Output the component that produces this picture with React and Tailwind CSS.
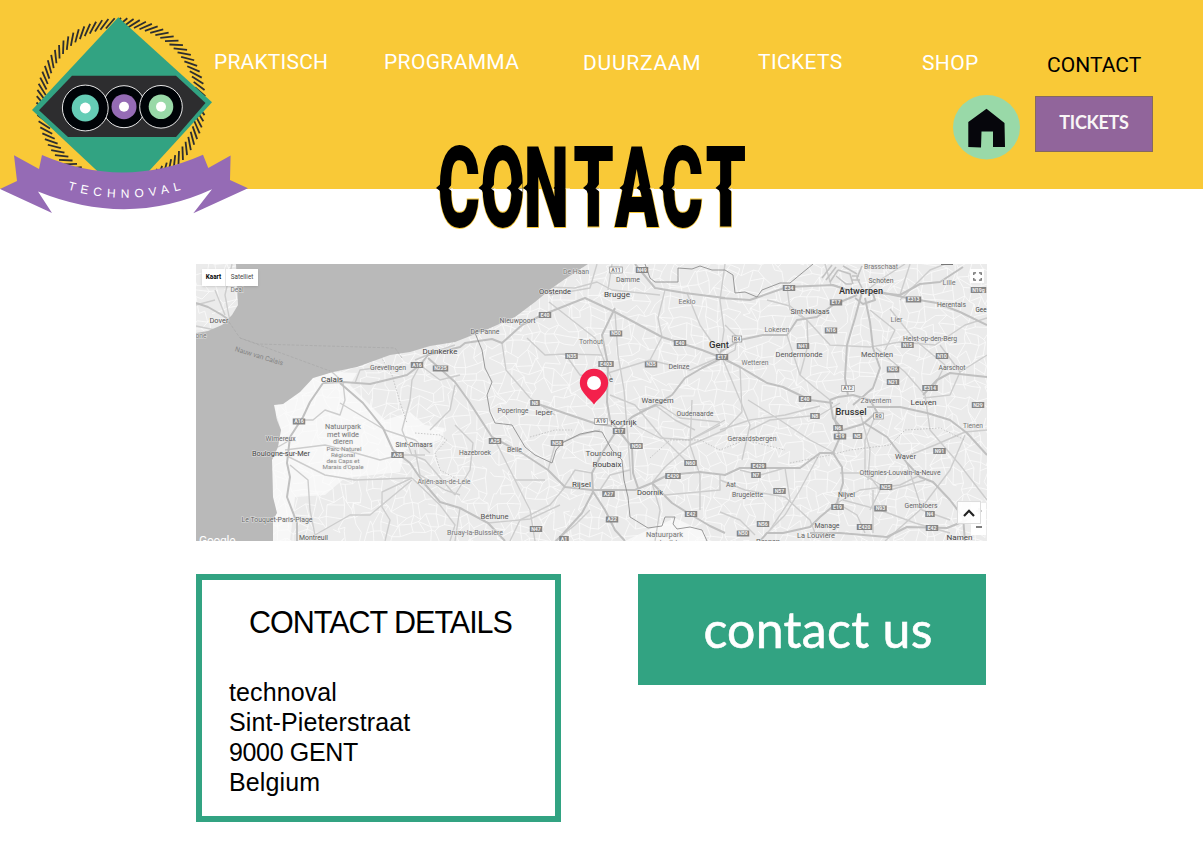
import React from "react";

const NAV = [
  { label: "PRAKTISCH", cls: "text-white pt-[50px] tracking-[0.200px]" },
  { label: "PROGRAMMA", cls: "text-white pt-[50px] tracking-[0.350px]" },
  { label: "DUURZAAM", cls: "text-white pt-[51px] tracking-[0.750px]" },
  { label: "TICKETS", cls: "text-white pt-[50px] tracking-[0.350px]" },
  { label: "SHOP", cls: "text-white pt-[51px] tracking-[0.400px]" },
  { label: "CONTACT", cls: "text-black pt-[53px] tracking-[0.050px]" },
];

/* ---------- logo ---------- */

const HATCHES = Array.from({ length: 84 }, (_, i) => {
  const a = (i / 84) * Math.PI * 2;
  const x = 121 + Math.cos(a) * 84.5;
  const y = 102.5 + Math.sin(a) * 84.5;
  const d = a + Math.PI / 4;
  return { x1: x, y1: y, x2: x - Math.cos(d) * 13.5, y2: y - Math.sin(d) * 13.5 };
});

function Record({ cx, cy, r, inner, hole, color }) {
  return (
    <g>
      <circle cx={cx} cy={cy} r={r} fill="#000307" stroke="#fff" strokeWidth="0.9" />
      <circle cx={cx} cy={cy} r={inner} fill={color} />
      <circle cx={cx} cy={cy} r={hole} fill="#fff" />
    </g>
  );
}

function Logo() {
  return (
    <svg className="absolute left-0 top-0" width="250" height="220" viewBox="0 0 250 220">
      <g stroke="#2d2d2f" strokeWidth="1.8">
        {HATCHES.map((h, i) => (
          <line key={i} {...h} />
        ))}
      </g>
      <path d="M118.3 17.3 212 102.3 139 182H109L32 110Z" fill="#32a382" />
      <path d="M72 75.700H176L205.500 103 176 137H68L39 110.300Z" fill="#2d2d2f" />
      <Record cx={124} cy={106.700} r={21} inner={12.500} hole={5} color="#956bb5" />
      <Record cx={85.300} cy={108} r={22.900} inner={13.600} hole={5.400} color="#65cdb6" />
      <Record cx={161} cy={106.800} r={21.300} inner={12.300} hole={5} color="#99d9a8" />
      <path
        d="M42 155Q123 190 203 154.700L208.300 168 230.600 155.500 230 180 248 188.300 193.300 213.300 212 189.300Q128 228 38 191.500L52 213 0 189 17 181 14 155.300 39 169Z"
        fill="#956bb5"
      />
      <path id="ribbon-line" d="M67.500 189.500Q125 206 184 189" fill="none" />
      <text fill="#fff" fontSize="12" style={{ fontFamily: '"Liberation Sans", sans-serif' }}>
        <textPath href="#ribbon-line" textLength="115" lengthAdjust="spacing">
          TECHNOVAL
        </textPath>
      </text>
    </svg>
  );
}

/* ---------- page title ---------- */

// [stem left, stem right, whether the right side is notched too]
const TITLE_NOTCHES = [
  [440.5, 452, 1], [483, 494.500, 1], [511, 521.500, 1], [527.500, 539, 0], [558, 569, 1],
  [587.500, 599, 1], [624, 635, 0], [641, 653, 1], [663.500, 675, 1], [720, 731.500, 1],
];

function Title() {
  return (
    <svg className="absolute left-[420px] top-[130px]" width="340" height="110" viewBox="420 130 340 110">
      <text
        transform="translate(0 226.500) scale(1 1.760)"
        x="437.800 480.500 523.800 573.200 614.800 661 705.500"
        y="0"
        fontSize="64.500"
        fontWeight="900"
        fill="#000"
        stroke="#f9c937"
        strokeWidth="1.200"
        paintOrder="stroke"
        style={{ fontFamily: "Roboto, sans-serif" }}
      >
        CONTACT
      </text>
      {TITLE_NOTCHES.map(([l, r, cut], i) => (
        <g key={i}>
          {cut ? (
            <>
              <path d={`M${r + 1} 183 L${r - 3.500} 188.500 H${r + 1}Z`} fill="#f9c937" />
              <path d={`M${r + 1} 192 L${r - 3.500} 188.500 H${r + 1}Z`} fill="#fff" />
            </>
          ) : null}
          <path d={`M${l + 1} 181 L${l - 0.500} 184.500 L${l - 4.500} 188 L${l - 1} 190.500 L${l + 1} 195Z`} fill="#000" />
        </g>
      ))}
    </svg>
  );
}

/* ---------- map ---------- */

const MAIN_ROADS = [
  "323,383 343,382 370,384 407,375 420,365 428,355 460,347 465,343 492,339 502,343 522,325 542,315 585,298 615,312 662,337 702,350 720,357 740,367 767,383 783,387 810,400 833,403",
  "867,407 900,407 927,413 950,420 967,433 987,455",
  "863,422 887,437 907,463 920,477 933,482 950,500 963,517 965,541",
  "837,407 835,420 840,437 833,453 842,467 843,483 837,503 820,517 810,527 783,533 767,533 760,541",
  "865,298 870,322 873,348 880,368 873,388 853,405",
  "862,292 855,318 847,345 845,378 848,395",
  "720,352 740,340 763,335 787,335 797,320 817,317 833,305 857,295",
  "720,298 750,300 787,287 833,285 857,293",
  "867,292 900,295 920,284 940,282 963,267",
  "880,292 907,298 937,303 960,312 987,325",
  "923,395 937,380 950,373 987,377",
  "722,358 702,368 685,378 672,395 655,405 632,417 615,433 602,453 592,473 593,492 582,513 562,535 556,541",
  "615,308 602,335 608,365 607,402 610,420 632,447 633,473 638,488",
  "428,358 455,382 468,400 492,437 522,453 548,470 565,487 592,490 635,490 652,483 668,475 700,472 725,475 740,468 800,468 820,453 833,453",
  "340,383 363,403 383,428 393,450 410,463 423,482 440,502 460,508 488,523 505,541",
  "323,383 310,402 303,417 290,437 287,463 290,477 287,497 297,523 297,541",
  "635,264 655,288 685,293 725,298",
  "652,483 672,503 688,513 710,526 725,533",
  "810,533 840,533 887,537 907,527 947,528 967,520",
  "535,403 570,415 597,424 612,426",
  "830,400 833,418 843,430 863,424 877,412 870,400 853,395 838,397 830,400",
  "858,290 872,291 875,300 863,304 855,298",
  "196,303 208,307 222,315 229,320",
  "592,490 605,510 615,530 625,541",
];

const ROADS = [
  "502,343 506,370 530,398 555,415",
  "549,302 595,338 612,380",
  "615,312 618,355 624,390 628,440 631,480",
  "542,287 575,288 597,282 612,290 660,295",
  "608,290 612,264", "662,337 658,318 665,290",
  "527,338 545,355 565,354 602,355", "565,354 580,375 610,380",
  "608,373 650,360 662,337", "650,360 690,370 720,357",
  "625,420 660,438 690,440 725,420", "610,395 635,405 660,435 690,465",
  "687,293 700,325 722,357", "725,264 720,300 724,330 720,357",
  "722,357 740,400 750,425 742,460", "740,367 742,412 725,430 690,445 665,467 652,483",
  "692,400 690,445 700,475 700,510", "720,430 750,420 785,415 820,406",
  "720,425 690,440", "787,335 800,375 815,388 830,400",
  "807,320 808,345 800,375", "767,300 790,306 807,320 830,345 870,347",
  "825,264 831,285 857,293", "787,287 790,310 807,320",
  "870,347 900,342 935,345 965,325 987,318",
  "890,309 915,340 945,365 935,385", "870,310 895,330 885,350",
  "876,348 905,372 925,395 930,430 960,465 987,500",
  "900,300 930,270 945,264", "940,345 960,372 950,395 923,398",
  "860,412 870,450 868,480", "877,412 865,440 865,470 880,490 870,510",
  "840,473 860,473 890,490 925,480", "837,503 860,490 900,485 920,475",
  "907,463 922,510 950,520", "965,435 950,470 920,510 885,541",
  "987,430 965,432 935,445 910,455", "843,500 880,510 915,523 950,533",
  "837,503 857,515 865,533", "873,490 873,533",
  "720,480 745,490 785,497 810,520 815,533", "785,468 790,500 770,530",
  "820,453 800,490 785,515 767,533", "740,470 760,475 785,468",
  "748,400 780,420 810,440 835,453", "720,512 740,520 755,535",
  "652,483 660,510 655,541", "665,495 720,490 720,475",
  "565,487 550,505 520,520 510,541", "515,480 530,510 535,541",
  "548,470 555,445 580,435 600,430", "495,440 515,480 545,480",
  "455,425 473,443 470,470 455,495", "430,430 450,410 455,385",
  "420,365 412,380 410,400 402,430", "420,365 440,380 460,375",
  "343,383 345,400 340,415 325,410 313,420 300,420",
  "340,403 360,415 385,430 415,440 430,453", "285,450 325,445 345,450 380,460 400,455 425,455",
  "285,455 305,465 325,475 355,480 412,478", "412,478 382,492 382,507 390,520 385,541",
  "412,478 440,505 455,525 450,541", "290,465 308,480 310,510 315,535 350,515 370,515 412,480",
  "415,450 420,475 445,490 460,495", "402,430 412,455 425,460 455,495",
  "278,447 290,440", "355,383 360,370 390,366", "343,382 332,372", "455,345 440,350 415,360",
  "460,508 455,541", "488,523 530,519 560,505",
  "597,264 590,288 550,295", "640,410 660,405 680,418 720,422",
  "655,405 675,420 695,430", "562,490 575,470 592,473", "600,490 610,475 630,470",
  "196,326 215,330 230,322 225,295 232,264", "196,305 215,300", "225,315 215,290",
  "722,357 735,350 737,337 725,325", "905,264 880,280 865,292", "960,372 987,355",
  "910,264 900,295", "840,403 820,415 770,420 750,430", "555,541 575,525 590,510",
];

const BORDERS = [
  "475,333 482,350 485,368 492,382 487,395 490,412 495,423 512,425 525,447 535,455 552,463 556,450 562,443 580,434 595,431 602,432 612,450 622,460 624,480 628,497 630,517 648,528 662,526 665,517 675,517 673,524 677,529 690,527 702,530 707,541",
  "645,264 650,278 655,282 678,282 678,268 692,269 700,266 712,270 725,270 733,275 735,293 745,292 757,297 762,290 780,283 790,283 813,264",
];

// Local streets: a jittered lattice joined to its right and lower neighbours.
function jitter(n) {
  const v = Math.sin(n * 127.1) * 43758.5453;
  return v - Math.floor(v) - 0.5;
}

function localStreets() {
  const step = 9;
  const at = (c, r) => [
    196 + c * step + jitter(c * 57 + r * 131) * 10,
    264 + r * step + jitter(c * 91 + r * 37 + 5) * 10,
  ];
  let d = "";
  for (let r = 0; r < 32; r++) {
    for (let c = 0; c < 89; c++) {
      const [x, y] = at(c, r);
      const [a, b] = at(c + 1, r);
      const [e, f] = at(c, r + 1);
      if (jitter(c * 13 + r * 71) > -0.3) d += `M${x.toFixed(1)} ${y.toFixed(1)}L${a.toFixed(1)} ${b.toFixed(1)}`;
      if (jitter(c * 29 + r * 17) > -0.3) d += `M${x.toFixed(1)} ${y.toFixed(1)}L${e.toFixed(1)} ${f.toFixed(1)}`;
    }
  }
  return d;
}
const STREETS = localStreets();

// [text, centre x, baseline y, size, width, weight, colour]
const PLACES = [
  ["Deal", 237, 291.500, 6.500, 13, 400, "#777"],
  ["Dover", 219, 323, 7, 19, 400, "#555"],
  ["one", 201, 338, 6.500, 11, 400, "#777"],
  ["Duinkerke", 440, 354, 7.500, 35, 400, "#444"],
  ["Grevelingen", 388, 369.500, 6.500, 36, 400, "#666"],
  ["Calais", 332, 381.500, 7.500, 22, 400, "#444"],
  ["De Haan", 576, 274, 6.500, 26, 400, "#777"],
  ["Damme", 628, 282, 6.500, 24, 400, "#666"],
  ["Oostende", 555, 294, 7, 32, 400, "#444"],
  ["Brugge", 617, 296.500, 7.500, 26, 400, "#444"],
  ["Eeklo", 687, 304, 6.500, 17, 400, "#777"],
  ["Nieuwpoort", 517.500, 322.500, 6.500, 36, 400, "#666"],
  ["De Panne", 485, 333.500, 6.500, 29, 400, "#666"],
  ["Torhout", 591, 343.500, 6.500, 24, 400, "#777"],
  ["Gent", 719, 348, 8.500, 20, 500, "#333"],
  ["Deinze", 679, 369, 6.500, 21, 400, "#666"],
  ["e", 611, 381.500, 6.500, 4, 400, "#555"],
  ["Waregem", 657.500, 402.500, 7, 32, 400, "#555"],
  ["Brasschaat", 881, 269, 6.200, 34, 400, "#777"],
  ["Schoten", 881, 282.500, 6.500, 25, 400, "#666"],
  ["Antwerpen", 861, 293.500, 8.500, 44, 500, "#333"],
  ["Lille", 949, 285, 6.500, 13, 400, "#777"],
  ["Herentals", 951.500, 306.500, 6.500, 29, 400, "#666"],
  ["Gee", 981, 312, 7, 11, 400, "#444"],
  ["Sint-Niklaas", 810, 313.500, 7, 39, 400, "#555"],
  ["Lier", 896.500, 322, 6.500, 12, 400, "#777"],
  ["Lokeren", 777, 331.500, 6.500, 25, 400, "#777"],
  ["Heist-op-den-Berg", 930, 340.500, 6.500, 54, 400, "#666"],
  ["Dendermonde", 799, 357, 7, 47, 400, "#555"],
  ["Mechelen", 877, 357, 7, 32, 400, "#555"],
  ["Wetteren", 755, 364.500, 6.500, 27, 400, "#777"],
  ["Aarschot", 952, 369.500, 6.500, 27, 400, "#666"],
  ["Zaventem", 876, 403, 6.500, 31, 400, "#777"],
  ["Leuven", 923.500, 405, 7.500, 26, 400, "#444"],
  ["Natuurpark", 343, 429, 6.500, 36, 400, "#777"],
  ["met wilde", 343, 436.500, 6.500, 32, 400, "#777"],
  ["dieren", 343, 443.500, 6.500, 20, 400, "#777"],
  ["Parc Naturel", 344, 450.500, 5.500, 35, 400, "#888"],
  ["Régional", 343, 456.500, 5.500, 24, 400, "#888"],
  ["des Caps et", 343, 463, 5.500, 33, 400, "#888"],
  ["Marais d'Opale", 343, 469, 5.500, 41, 400, "#888"],
  ["Wimereux", 280.500, 441, 6.500, 30, 400, "#666"],
  ["Boulogne-sur-Mer", 281, 455.500, 7, 58, 400, "#444"],
  ["Sint-Omaars", 414, 447, 6.500, 37, 400, "#555"],
  ["Ariën-aan-de-Leie", 444, 484, 6.500, 53, 400, "#777"],
  ["Le Touquet-Paris-Plage", 277, 522, 6.500, 71, 400, "#666"],
  ["Montreuil", 313.500, 539.500, 6.500, 29, 400, "#555"],
  ["Poperinge", 513, 413, 6.500, 31, 400, "#666"],
  ["Ieper", 544, 415, 7, 17, 400, "#555"],
  ["Oudenaarde", 695, 415.500, 6.500, 37, 400, "#666"],
  ["Kortrijk", 623.500, 425, 7.500, 26, 400, "#444"],
  ["Hazebroek", 475, 455, 6.500, 32, 400, "#666"],
  ["Belle", 514.500, 452, 6.500, 15, 400, "#666"],
  ["Tourcoing", 603.500, 456, 7.500, 36, 400, "#555"],
  ["Roubaix", 607, 466.500, 7.500, 29, 400, "#444"],
  ["Rijsel", 581.500, 487, 7.500, 19, 400, "#444"],
  ["Doornik", 650, 495, 7.500, 26, 400, "#444"],
  ["Béthune", 494.500, 519, 7, 28, 400, "#555"],
  ["Bruay-la-Buissière", 475, 534.500, 6.500, 56, 400, "#777"],
  ["Natuurpark", 664.500, 536.500, 6.200, 37, 400, "#777"],
  ["met wilde", 665, 544.500, 6.200, 32, 400, "#777"],
  ["Brussel", 851, 415, 9, 31, 500, "#333"],
  ["Tienen", 973, 427.500, 6.500, 20, 400, "#777"],
  ["Geraardsbergen", 752, 440.500, 6.500, 49, 400, "#666"],
  ["Waver", 905.500, 458.500, 7, 21, 400, "#555"],
  ["Ottignies-Louvain-la-Neuve", 900, 475, 6.500, 81, 400, "#666"],
  ["Aat", 731, 486.500, 6.500, 10, 400, "#666"],
  ["Brugelette", 747.500, 497, 6.500, 31, 400, "#666"],
  ["Nijvel", 846.500, 497, 6.500, 17, 400, "#555"],
  ["Gembloers", 921, 508, 6.500, 33, 400, "#666"],
  ["Manage", 827, 528, 6.500, 25, 400, "#555"],
  ["La Louvière", 816, 537.500, 6.500, 38, 400, "#666"],
  ["Bergen", 768, 543.500, 6.500, 24, 400, "#666"],
  ["Namen", 959.500, 540, 7.500, 26, 400, "#444"],
];

// [text, centre x, centre y]; the last flag marks the white variant.
const SHIELDS = [
  ["A16", 417, 365], ["N225", 440.500, 368.500], ["A11", 616, 270, 1], ["N49", 642, 270],
  ["E40", 545, 315], ["N50", 616, 333.500], ["E40", 680, 343], ["N35", 571.500, 356],
  ["E403", 606, 364], ["N35", 651, 364.500], ["E17", 722, 357], ["N8", 535, 403],
  ["E34", 789, 288], ["E17", 836, 302.500], ["E313", 913.500, 299.500], ["N19g", 978.500, 290],
  ["R4", 737, 339, 1], ["N16", 831, 330.500], ["N41", 803, 346], ["N15", 907.500, 345],
  ["N10", 942, 356], ["N26", 893, 369.500], ["N21", 893, 382], ["A12", 848, 388.500, 1],
  ["E314", 930, 388], ["E40", 805, 399], ["A16", 299, 421.500], ["A26", 397.500, 455],
  ["A25", 495, 441], ["N58", 557, 443], ["A19", 601, 421.500, 1], ["E17", 619, 431],
  ["N50", 636.500, 446], ["N60", 690.500, 463], ["E429", 673, 476], ["A27", 608.500, 494],
  ["E42", 691, 514], ["A22", 612, 519.500], ["N47", 536, 529], ["A1", 564, 539],
  ["N29", 978, 405], ["N8", 815, 416], ["R0", 878.500, 416, 1], ["N6", 838, 428],
  ["E19", 840, 436.500], ["N5", 857.500, 436], ["N91", 939.500, 451], ["E429", 758.500, 466],
  ["N7", 756, 475], ["N57", 779.500, 491], ["N25", 886, 487], ["E19", 837.500, 507],
  ["N93", 880.500, 508.500], ["N4", 930, 514], ["N56", 763, 524], ["E420", 864.500, 527],
  ["E42", 932, 528], ["N50", 743, 533.500],
];

function RouteMap() {
  return (
    <svg
      className="block"
      width="791"
      height="277"
      viewBox="196 264 791 277"
      style={{ fontFamily: "Roboto, sans-serif" }}
    >
      <rect x="196" y="264" width="791" height="277" fill="#ebebeb" />
      <path
        d="M283 404 L300 392 L313 378 L333 372 L357 373 L350 385 L365 400 L385 420 L410 412 L425 425 L445 428 L440 440 L405 450 L400 472 L345 478 L325 495 L295 497 L290 541 H273 V497 L272 460 L281 430 L274 405Z"
        fill="#f7f7f7"
      />
      <path d="M625 541 L648 530 L675 518 L705 532 V541Z" fill="#f7f7f7" />
      <path d={STREETS} stroke="#fbfbfb" strokeWidth="0.800" fill="none" />
      <g fill="none" stroke="#cdcdcd" strokeWidth="1.400" strokeLinejoin="round">
        {ROADS.map((p, i) => <polyline key={i} points={p} />)}
      </g>
      <g fill="none" stroke="#c0c0c0" strokeWidth="2" strokeLinejoin="round">
        {MAIN_ROADS.map((p, i) => <polyline key={i} points={p} />)}
      </g>
      <g fill="none" stroke="#c2c2c2" strokeWidth="1.600">
        <path d="M822 278 l10 -13 M826 280 l10 -13 M830 282 l8 -12 M838 270 l12 4 3 10 M843 266 l14 8 M852 280 h8 M852 276 h7 M836 276 l10 8 6 0 M862 266 l-5 12 5 10" />
      </g>
      <g fill="none" stroke="#8e8e8e" strokeWidth="0.900">
        {BORDERS.map((p, i) => <polyline key={i} points={p} />)}
      </g>
      <g fill="none" stroke="#b5b5b5" strokeWidth="0.700" strokeDasharray="1.500 1.500">
        <path d="M381 357 L392 375 L400 402 L407 423 M415 433 L440 435 L447 440 L435 453 L440 470 L455 478 M650 458 L670 440 L700 440 L720 450 L745 440 L785 450 M790 463 L830 455 L850 450 L890 445 L905 430 L940 428 L965 440 M530 437 L555 430 L572 430" />
      </g>
      <path
        d="M236 264 L238 305 L232 315 L222 325 L208 331 L196 333 V541 H273 V520 L277 513 L273 497 L272 460 L278 447 L281 430 L277 420 L274 405 L283 404 L300 392 L313 378 L333 372 L357 367 L390 355 L410 352 L430 346 L455 342 L488 329 L515 317 L535 302 L552 288 L568 277 L588 264Z"
        fill="#b9b9b9"
      />
      <path d="M229 322 L240 338 L258 344 L395 348 L402 358 M240 338 L330 371" fill="none" stroke="#a8a8a8" strokeWidth="0.700" strokeDasharray="3 1.500" />
      <text transform="translate(234.500 351) rotate(17)" fontSize="7" fill="#858585" textLength="50" lengthAdjust="spacingAndGlyphs">
        Nauw van Calais
      </text>
      {SHIELDS.map(([t, x, y, light], i) => {
        const w = t.length * 3 + 3.500;
        return (
          <g key={i}>
            <rect x={x - w / 2} y={y - 3} width={w} height={6} fill={light ? "#fafafa" : "#868686"} stroke={light ? "#8a8a8a" : "none"} strokeWidth="0.700" />
            <text x={x} y={y + 1.900} textAnchor="middle" fontSize="5.200" fontWeight="700" fill={light ? "#777" : "#f2f2f2"}>
              {t}
            </text>
          </g>
        );
      })}
      {PLACES.map(([t, x, y, s, w, wt, c], i) => (
        <text
          key={i}
          x={x - w / 2}
          y={y}
          fontSize={s + 0.6}
          fontWeight={wt}
          fill={c}
          textLength={w}
          lengthAdjust="spacingAndGlyphs"
          stroke="#efefef"
          strokeOpacity="0.700"
          strokeWidth="1.200"
          paintOrder="stroke"
        >
          {t}
        </text>
      ))}
      <path d="M941 264.500H953" stroke="#777" />
      <text x="199" y="544.500" fontSize="12" fill="#fff" textLength="36.500">
        Google
      </text>
      <path d="M594 404.500 C590 399 579.800 392 579.800 383 A14.200 14.200 0 0 1 608.200 383 C608.200 392 598 399 594 404.500Z" fill="#f3214c" />
      <circle cx="594" cy="383" r="7" fill="#fff" />
    </svg>
  );
}

function MapPanel() {
  return (
    <section className="relative h-[277px] w-[791px] overflow-hidden">
      <RouteMap />
      <div className="absolute left-[6px] top-[5px] flex h-[17px] w-[56px] items-center bg-white text-[6.300px] leading-none shadow-sm [font-family:Roboto,sans-serif]">
        <span className="w-[24px] border-r border-[#e6e6e6] py-[5px] text-center font-bold text-black">Kaart</span>
        <span className="flex-1 text-center text-[#444]">Satelliet</span>
      </div>
      <div className="absolute left-[774px] top-[5px] flex h-[14px] w-[14px] items-center justify-center bg-white">
        <svg width="9" height="9" viewBox="0 0 8 8" fill="none" stroke="#666" strokeWidth="1.100">
          <path d="M.7 2.700V.7H2.700M5.300 .7H7.300V2.700M7.300 5.300V7.300H5.300M2.700 7.300H.7V5.300" />
        </svg>
      </div>
      <div className="absolute left-[775px] top-[239px] h-[32px] w-[15px] bg-white">
        <svg width="15" height="32" viewBox="0 0 15 32" fill="none">
          <path d="M5 8H11M8 5V11" stroke="#bbb" strokeWidth="1.500" />
          <path d="M5 24H11" stroke="#555" strokeWidth="1.500" />
        </svg>
      </div>
      <div className="absolute left-[761px] top-[237px] flex h-[23px] w-[24px] items-center justify-center border border-[#ddd] bg-white/90">
        <svg width="12" height="8" viewBox="0 0 12 8" fill="none" stroke="#222" strokeWidth="2.200">
          <path d="M1 7 6 1.800 11 7" />
        </svg>
      </div>
    </section>
  );
}

/* ---------- page ---------- */

export default function App() {
  return (
    <div className="relative h-[848px] w-[1203px] overflow-hidden bg-white">
      <header className="h-[189px] bg-[#f9c937]">
        <nav className="grid h-[95px] grid-cols-[170px_199px_175px_164px_125px_156px] pl-[214px] text-[21px] leading-6 [font-family:Roboto,sans-serif]">
          {NAV.map((n) => (
            <a key={n.label} className={n.cls}>
              {n.label}
            </a>
          ))}
        </nav>
        <div className="flex justify-end gap-[15px] pr-[50px]">
          <svg width="67" height="65" viewBox="953 95 67 65">
            <ellipse cx="986.500" cy="127.300" rx="33.500" ry="32.200" fill="#99d9a8" />
            <path d="M986.500 108.700 1004.500 123 1005 147H993V131.500H981.500L981 147.500 968.300 147V122Z" fill="#06060c" />
          </svg>
          <a className="mt-px flex h-[56px] w-[118px] items-center justify-center border border-[#86695f] bg-[#91659b] pb-[4px] text-[18px] font-bold leading-none tracking-[-0.300px] text-[#f8f5f6] [font-family:Lato,sans-serif]">
            TICKETS
          </a>
        </div>
      </header>
      <Logo />
      <h1 className="contents">
        <Title />
      </h1>
      <main className="ml-[196px] mt-[75px] flex w-[791px] flex-col gap-[33px]">
        <MapPanel />
        <div className="flex items-start justify-between pr-px">
          <section className="h-[248px] w-[365px] border-[6px] border-[#32a382] px-[27px] pt-[24px] text-black [font-family:'Liberation_Sans',sans-serif]">
            <h2 className="whitespace-nowrap pl-[20px] text-[30.500px] leading-[36px] tracking-[-1px]">CONTACT DETAILS</h2>
            <address className="mt-[37px] text-[25px] not-italic leading-[30px]">
              <div className="tracking-[0.100px]">technoval</div>
              <div className="tracking-[0.120px]">Sint-Pieterstraat</div>
              <div className="tracking-[-0.350px]">9000 GENT</div>
              <div className="tracking-[0.120px]">Belgium</div>
            </address>
          </section>
          <a className="flex h-[111px] w-[348px] items-center justify-center whitespace-nowrap bg-[#32a382] pl-[12px] pb-[2px] text-[50px] leading-none tracking-[0.300px] text-white [-webkit-text-stroke:0.600px_white] [font-family:Lato,sans-serif]">
            contact us
          </a>
        </div>
      </main>
    </div>
  );
}
